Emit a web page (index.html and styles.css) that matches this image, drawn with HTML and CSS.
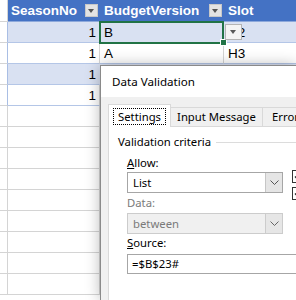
FILE: index.html
```html
<!DOCTYPE html>
<html>
<head>
<meta charset="utf-8">
<link rel="stylesheet" href="styles.css">
</head>
<body>
<div class="sheet">
  <div class="row hdr">
    <div class="c c0"></div>
    <div class="c c1"><span>SeasonNo</span><i class="fbtn"></i></div>
    <div class="c c2"><span>BudgetVersion</span><i class="fbtn"></i></div>
    <div class="c c3"><span>Slot</span></div>
  </div>
  <div class="row band">
    <div class="c c0"></div>
    <div class="c c1">1</div>
    <div class="c c2">B</div>
    <div class="c c3">H2</div>
  </div>
  <div class="row tbl">
    <div class="c c0"></div>
    <div class="c c1">1</div>
    <div class="c c2">A</div>
    <div class="c c3">H3</div>
  </div>
  <div class="row band">
    <div class="c c0"></div>
    <div class="c c1">1</div>
    <div class="c c2"></div>
    <div class="c c3"></div>
  </div>
  <div class="row tbl">
    <div class="c c0"></div>
    <div class="c c1">1</div>
    <div class="c c2"></div>
    <div class="c c3"></div>
  </div>
  <div class="row"><div class="c c0"></div><div class="c c1"></div><div class="c c2"></div><div class="c c3"></div></div>
  <div class="row"><div class="c c0"></div><div class="c c1"></div><div class="c c2"></div><div class="c c3"></div></div>
  <div class="row"><div class="c c0"></div><div class="c c1"></div><div class="c c2"></div><div class="c c3"></div></div>
  <div class="row"><div class="c c0"></div><div class="c c1"></div><div class="c c2"></div><div class="c c3"></div></div>
  <div class="row"><div class="c c0"></div><div class="c c1"></div><div class="c c2"></div><div class="c c3"></div></div>
  <div class="row"><div class="c c0"></div><div class="c c1"></div><div class="c c2"></div><div class="c c3"></div></div>
  <div class="row"><div class="c c0"></div><div class="c c1"></div><div class="c c2"></div><div class="c c3"></div></div>
  <div class="row"><div class="c c0"></div><div class="c c1"></div><div class="c c2"></div><div class="c c3"></div></div>
  <div class="row"><div class="c c0"></div><div class="c c1"></div><div class="c c2"></div><div class="c c3"></div></div>
</div>

<div class="selbox"></div>
<div class="handle"></div>
<div class="celldd"><i class="tri"></i></div>

<div class="dlg">
  <div class="dlg-title">Data Validation</div>
  <div class="dlg-body">
    <div class="tabs">
      <div class="tab sel"><span class="focus">Settings</span></div>
      <div class="tab">Input Message</div>
      <div class="tab last">Error Alert</div>
    </div>
    <div class="pane">
      <div class="group"><span>Validation criteria</span><i class="gline"></i></div>
      <div class="cols">
        <div class="leftcol">
          <div class="lbl"><u>A</u>llow:</div>
          <div class="combo"><span class="val">List</span><span class="cbtn"><svg width="9" height="5" viewBox="0 0 9 5"><path d="M0.5 0.5 L4.5 4.5 L8.5 0.5" fill="none" stroke="#555" stroke-width="1"/></svg></span></div>
          <div class="lbl dis">Data:</div>
          <div class="combo dis"><span class="val">between</span><span class="cbtn"><svg width="9" height="5" viewBox="0 0 9 5"><path d="M0.5 0.5 L4.5 4.5 L8.5 0.5" fill="none" stroke="#666" stroke-width="1"/></svg></span></div>
        </div>
        <div class="rightcol">
          <div class="chk"><svg width="11" height="11" viewBox="0 0 11 11"><path d="M2 5.5 L4.5 8 L9 2.5" fill="none" stroke="#222" stroke-width="1.3"/></svg></div>
          <div class="chk"><svg width="11" height="11" viewBox="0 0 11 11"><path d="M2 5.5 L4.5 8 L9 2.5" fill="none" stroke="#222" stroke-width="1.3"/></svg></div>
        </div>
      </div>
      <div class="lbl src"><u>S</u>ource:</div>
      <div class="input">=$B$23#</div>
    </div>
  </div>
</div>
</body>
</html>
```
FILE: styles.css
```css
html, body {
  margin: 0;
  padding: 0;
  width: 296px;
  height: 300px;
  overflow: hidden;
  background: #fff;
}
body {
  position: relative;
  font-family: "Liberation Sans", Arial, sans-serif;
}
.sheet {
  display: flex;
  flex-direction: column;
}
.row {
  display: flex;
  flex: none;
}
.c {
  box-sizing: border-box;
  flex: none;
  height: 21px;
  border-right: 1px solid #d4d4d4;
  border-bottom: 1px solid #d4d4d4;
  font-size: 13.5px;
  line-height: 22px;
  white-space: nowrap;
  overflow: hidden;
  color: #000;
}
.hdr .c {
  height: 22px;
  line-height: 22px;
}
.c0 { width: 8px; }
.c1 { width: 92px; text-align: right; padding-right: 3px; }
.c2 { width: 124px; padding-left: 4px; }
.c3 { width: 72px; padding-left: 4px; border-right: none; }

.hdr .c1, .hdr .c2, .hdr .c3 {
  background: #4472c4;
  color: #fff;
  font-weight: bold;
  border-right-color: #4472c4;
  border-bottom-color: #8ea9db;
  display: flex;
  align-items: center;
  justify-content: space-between;
  text-align: left;
  line-height: 16px;
}
.hdr .c1 { padding-left: 3px; padding-right: 1px; }
.hdr .c2 { padding-left: 4px; padding-right: 1px; }
.hdr .c3 { padding-left: 4px; }
.fbtn {
  display: block;
  box-sizing: border-box;
  width: 13px;
  height: 13px;
  background: #e3e3e3;
  border: 1px solid #c8c8c8;
  position: relative;
}
.fbtn::after {
  content: "";
  position: absolute;
  left: 2px;
  top: 4px;
  border-left: 3.5px solid transparent;
  border-right: 3.5px solid transparent;
  border-top: 4px solid #555;
}
.band .c1, .band .c2, .band .c3 {
  background: #d9e1f2;
  border-right-color: #d9e1f2;
  border-bottom-color: #b4c6e7;
}
.tbl .c1, .tbl .c2, .tbl .c3 {
  border-bottom-color: #b4c6e7;
}
.band .c0, .tbl .c0 {
  border-right-color: #a9bee4;
}

.selbox {
  position: absolute;
  left: 99px;
  top: 21px;
  width: 125px;
  height: 23px;
  box-sizing: border-box;
  border: 2px solid #217346;
}
.handle {
  position: absolute;
  left: 220px;
  top: 39px;
  width: 7px;
  height: 7px;
  box-sizing: border-box;
  background: #217346;
  border: 1px solid #fff;
}
.celldd {
  position: absolute;
  left: 225px;
  top: 24px;
  width: 17px;
  height: 16px;
  box-sizing: border-box;
  background: #f4f4f4;
  border: 1px solid #b4b4b4;
}
.celldd .tri {
  position: absolute;
  left: 4px;
  top: 5px;
  border-left: 3.5px solid transparent;
  border-right: 3.5px solid transparent;
  border-top: 4px solid #595959;
}

/* dialog */
.dlg {
  position: absolute;
  left: 100px;
  top: 65px;
  width: 196px;
  height: 235px;
  box-sizing: border-box;
  border: 1px solid #8a8a8a;
  border-right: none;
  border-bottom: none;
  background: #f0f0f0;
  box-shadow: 0 0 14px rgba(0, 0, 0, 0.28);
  font-family: "Noto Sans", "Open Sans", sans-serif;
  font-size: 11.3px;
  color: #000;
  overflow: hidden;
}
.dlg-title {
  height: 31px;
  line-height: 31px;
  padding-left: 11px;
  background: #fff;
  font-size: 11.6px;
}
.dlg-body {
  padding: 7px 0 0 7px;
}
.tabs {
  display: flex;
  align-items: flex-end;
  height: 22px;
}
.tab {
  box-sizing: border-box;
  flex: none;
  height: 19px;
  line-height: 18px;
  border: 1px solid #d9d9d9;
  border-bottom: none;
  background: #f0f0f0;
  text-align: center;
  white-space: nowrap;
  margin-left: -1px;
  width: 93px;
}
.tab.last {
  width: 60px;
  text-align: left;
  padding-left: 9px;
}
.tab.sel {
  margin-left: 0;
  width: 63px;
  height: 23px;
  margin-bottom: -1px;
  background: #fff;
  position: relative;
  z-index: 1;
  padding-top: 3px;
  line-height: 15px;
}
.focus {
  display: inline-block;
  border: 1px dotted #000;
  padding: 0 4px;
  line-height: 15px;
}
.pane {
  background: #fff;
  border: 1px solid #d9d9d9;
  border-right: none;
  height: 200px;
  padding: 7px 0 0 9px;
}
.group {
  display: flex;
  align-items: center;
  height: 16px;
  line-height: 16px;
  white-space: nowrap;
}
.gline {
  flex: 1;
  height: 0;
  border-top: 1px solid #dcdcdc;
  margin-left: 5px;
}
.cols {
  display: flex;
  padding-left: 9px;
  gap: 9px;
}
.leftcol {
  width: 156px;
  flex: none;
}
.lbl {
  height: 16px;
  line-height: 16px;
  margin-top: 5px;
  white-space: nowrap;
}
.lbl + .combo { margin-top: 1px; }
.lbl.dis {
  color: #7a7a7a;
  margin-top: 2px;
}
.lbl.dis + .combo { margin-top: 2px; }
.combo {
  box-sizing: border-box;
  height: 21px;
  border: 1px solid #a6a6a6;
  background: #fff;
  display: flex;
}
.combo .val {
  flex: 1;
  padding-left: 5px;
  line-height: 19px;
}
.combo .cbtn {
  box-sizing: border-box;
  width: 17px;
  flex: none;
  background: #e5e5e5;
  border-left: 1px solid #c6c6c6;
  display: flex;
  align-items: center;
  justify-content: center;
}
.combo.dis {
  background: #f0f0f0;
  border-color: #cccccc;
  color: #7a7a7a;
}
.combo.dis .cbtn {
  background: #e6e6e6;
  border-left-color: #cccccc;
}
.rightcol {
  display: flex;
  flex-direction: column;
  gap: 4px;
  padding-top: 20px;
}
.chk {
  box-sizing: border-box;
  flex: none;
  width: 13px;
  height: 13px;
  border: 1px solid #333;
  background: #fff;
  display: flex;
  align-items: center;
  justify-content: center;
}
.lbl.src {
  margin-top: 1px;
  margin-left: 9px;
}
.input {
  box-sizing: border-box;
  margin: 3px 0 0 9px;
  height: 20px;
  border: 1px solid #a6a6a6;
  border-right: none;
  background: #fff;
  padding-left: 4px;
  line-height: 18px;
  white-space: nowrap;
}
```
